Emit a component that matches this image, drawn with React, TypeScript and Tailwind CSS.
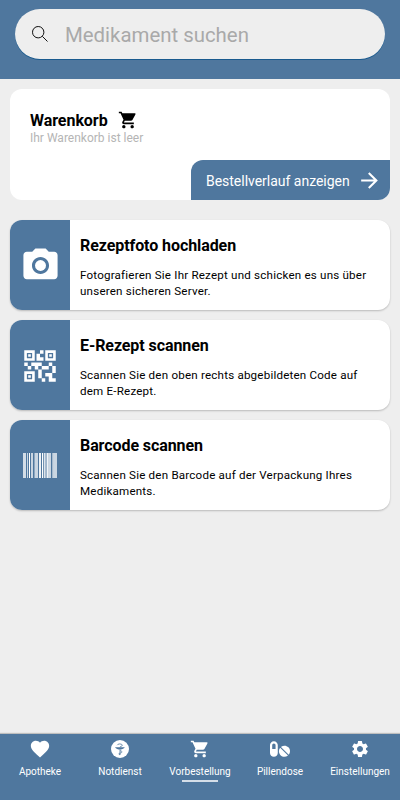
import { useState, type ReactNode } from 'react';
import { MdShoppingCart, MdArrowForward, MdCameraAlt, MdQrCode2, MdFavorite, MdSettings } from 'react-icons/md';
import { FaPills } from 'react-icons/fa';

interface ActionCardProps {
  icon: ReactNode;
  title: string;
  lines: string[];
}

function SearchIcon() {
  return (
    <svg viewBox="0 0 16 16" className="w-4 h-4 shrink-0" fill="none" stroke="#111" strokeWidth="1">
      <circle cx="6.2" cy="6.2" r="5.7" />
      <path d="M10.3 10.3l5.2 5.2" />
    </svg>
  );
}

// x, width, opacity
const bars = [
  [0, 3, 0.75],
  [4, 1, 0.7],
  [6, 1, 1],
  [8, 2, 0.7],
  [11.5, 3.5, 0.7],
  [16, 2, 0.9],
  [19, 1.2, 1],
  [21.2, 1.3, 1],
  [23.5, 1.5, 0.9],
  [25, 3, 0.7],
  [29.5, 1, 1],
  [30.5, 3.5, 0.7],
];

function BarcodeIcon() {
  return (
    <svg viewBox="0 0 34 25" className="mb-px w-[34px] h-[25px]" fill="#fff">
      {bars.map(([x, width, opacity]) => (
        <rect key={x} x={x} y="0" width={width} height="25" opacity={opacity} />
      ))}
    </svg>
  );
}

function PharmacyIcon() {
  return (
    <svg viewBox="0 0 18 18" className="w-[18px] h-[18px]">
      <circle cx="9" cy="9" r="9" fill="#fff" />
      <path d="M4.300 7.200h9.200v.8c-1 0-1.300 1.500-4.600 1.500s-3.600-1.500-4.600-1.500z" fill="#4f779e" />
      <g fill="none" stroke="#4f779e" strokeWidth="0.8">
        <path d="M9 9.500v5.500" />
        <path d="M6.200 5.200c.2-1.700 5.200-1.700 5.200.1 0 1-2.500.9-2.500 2" />
        <path d="M9 10.800c2.600 0 2.600 2.100 0 2.300-1.500.1-1.500 1.500 0 1.700" />
      </g>
    </svg>
  );
}

function ActionCard({ icon, title, lines }: ActionCardProps) {
  return (
    <button className="flex h-[90px] w-full overflow-hidden rounded-xl bg-white text-left shadow-[0_1px_2px_rgba(0,0,0,0.22)]">
      <div className="flex h-full w-[60px] shrink-0 items-center justify-center bg-[#4f779e] pt-0.5 text-white">{icon}</div>
      <div className="h-full pl-2.5 pt-4">
        <h2 className="text-[16px] leading-5 font-bold tracking-[-0.08px]">{title}</h2>
        <p className="mt-[11px] text-[11.6px] leading-4 tracking-[0.2px] whitespace-nowrap">
          {lines.map((line) => (
            <span key={line} className="block">{line}</span>
          ))}
        </p>
      </div>
    </button>
  );
}

const tabs = [
  { label: 'Apotheke', icon: <MdFavorite size={22} /> },
  { label: 'Notdienst', icon: <PharmacyIcon /> },
  { label: 'Vorbestellung', icon: <MdShoppingCart size={20} /> },
  { label: 'Pillendose', icon: <FaPills className="w-5 h-[18px]" /> },
  { label: 'Einstellungen', icon: <MdSettings size={20} /> },
];

export default function App() {
  const [activeTab, setActiveTab] = useState('Vorbestellung');

  return (
    <div className="flex h-[800px] w-[400px] flex-col overflow-hidden bg-[#eeeeee] font-['Roboto',sans-serif] text-black">
      {/* Search */}
      <header className="h-[79px] shrink-0 bg-[#4f779e] px-[15px] pt-[9px]">
        <label className="flex h-[50px] items-center rounded-full bg-[#eeeeee] pl-[17px] shadow-[0_1px_0_#195a8e]">
          <SearchIcon />
          <input
            placeholder="Medikament suchen"
            className="mt-[2px] ml-[17px] w-[280px] bg-transparent text-[20.4px] leading-[30px] outline-none placeholder:text-[#a9a9a9]"
          />
        </label>
      </header>

      <main className="flex-1 px-2.5 pt-2.5">
        {/* Cart */}
        <section className="flex h-[111px] flex-col justify-between overflow-hidden rounded-xl bg-white">
          <div className="pl-5 pt-5">
            <div className="flex h-[22px] items-center">
              <h2 className="pt-0.5 text-[16px] leading-[22px] font-bold tracking-[-0.05px]">Warenkorb</h2>
              <MdShoppingCart size={20} className="ml-2.5" />
            </div>
            <p className="text-[12px] leading-[14px] text-[#b5b5b5]">Ihr Warenkorb ist leer</p>
          </div>
          <button className="flex h-10 w-[199px] items-center self-end rounded-tl-xl bg-[#4f779e] pl-[15px] text-white">
            <span className="pt-0.5 text-[14px] tracking-[-0.02px] whitespace-nowrap">Bestellverlauf anzeigen</span>
            <MdArrowForward size={25} className="ml-[7px] shrink-0" />
          </button>
        </section>

        <div className="mt-5 flex flex-col gap-2.5">
          <ActionCard
            icon={<MdCameraAlt size={41} className="mb-0.5" />}
            title="Rezeptfoto hochladen"
            lines={['Fotografieren Sie Ihr Rezept und schicken es uns über', 'unseren sicheren Server.']}
          />
          <ActionCard
            icon={<MdQrCode2 size={42} />}
            title="E-Rezept scannen"
            lines={['Scannen Sie den oben rechts abgebildeten Code auf', 'dem E-Rezept.']}
          />
          <ActionCard
            icon={<BarcodeIcon />}
            title="Barcode scannen"
            lines={['Scannen Sie den Barcode auf der Verpackung Ihres', 'Medikaments.']}
          />
        </div>
      </main>

      {/* Bottom navigation */}
      <nav className="grid h-[66px] shrink-0 grid-cols-5 bg-[#4f779e] text-white shadow-[0_-1px_1px_rgba(0,0,0,0.2)]">
        {tabs.map(({ label, icon }) => (
          <button key={label} onClick={() => setActiveTab(label)} className="flex flex-col items-center pt-[5px]">
            <span className="flex h-5 items-center">{icon}</span>
            <span className="mt-1.5 text-[10px] leading-[14px]">{label}</span>
            {activeTab === label && <span className="mt-px h-[2px] w-9 bg-[#d5dee8]" />}
          </button>
        ))}
      </nav>
    </div>
  );
}
